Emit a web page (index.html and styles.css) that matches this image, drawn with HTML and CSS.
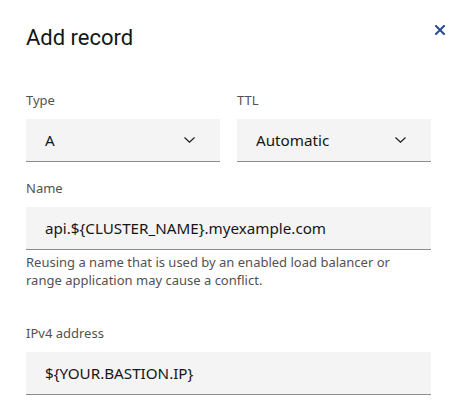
FILE: index.html
```html
<!DOCTYPE html>
<html lang="en">
<head>
<meta charset="utf-8">
<title>Add record</title>
<link rel="stylesheet" href="styles.css">
</head>
<body>
<div class="modal">
  <div class="header">
    <h1 class="title">Add record</h1>
    <button class="close" aria-label="Close">
      <svg width="10" height="10" viewBox="0 0 10 10"><path d="M1 1 L9 9 M9 1 L1 9" stroke="#2c4a93" stroke-width="2" fill="none" stroke-linecap="square"/></svg>
    </button>
  </div>
  <div class="row">
    <div class="field">
      <div class="label">Type</div>
      <div class="control select"><span>A</span>
        <svg class="chev" width="11" height="6" viewBox="0 0 11 6"><path d="M0.5 0.5 L5.5 5.2 L10.5 0.5" stroke="#161616" stroke-width="1.1" fill="none"/></svg>
      </div>
    </div>
    <div class="field">
      <div class="label">TTL</div>
      <div class="control select"><span>Automatic</span>
        <svg class="chev" width="11" height="6" viewBox="0 0 11 6"><path d="M0.5 0.5 L5.5 5.2 L10.5 0.5" stroke="#161616" stroke-width="1.1" fill="none"/></svg>
      </div>
    </div>
  </div>
  <div class="field name">
    <div class="label">Name</div>
    <div class="control">api.${CLUSTER_NAME}.myexample.com</div>
    <p class="helper">Reusing a name that is used by an enabled load balancer or range application may cause a conflict.</p>
  </div>
  <div class="field ipv4">
    <div class="label">IPv4 address</div>
    <div class="control">${YOUR.BASTION.IP}</div>
  </div>
</div>
</body>
</html>
```
FILE: styles.css
```css
html, body {
  margin: 0;
  padding: 0;
  background: #ffffff;
}
.modal {
  width: 405px;
  padding: 0 0 0 26px;
  font-family: "Noto Sans", "Open Sans", sans-serif;
  color: #161616;
}
.header {
  display: flex;
  justify-content: space-between;
  align-items: flex-start;
  padding-top: 24px;
  height: 70px;
  box-sizing: border-box;
}
.title {
  margin: 0;
  font-family: Roboto, "Noto Sans", sans-serif;
  font-weight: 400;
  font-size: 22px;
  line-height: 28px;
  color: #161616;
}
.close {
  border: 0;
  background: none;
  padding: 0;
  margin: 1px -14px 0 0;
  width: 10px;
  height: 10px;
  display: flex;
}
.row {
  display: grid;
  grid-template-columns: 194px 194px;
  column-gap: 17px;
  margin-top: 22px;
}
.label {
  font-size: 13px;
  line-height: 16px;
  color: #525252;
  margin-bottom: 11px;
}
.control {
  height: 43px;
  box-sizing: border-box;
  background: #f4f4f4;
  border-bottom: 1px solid #8d8d8d;
  padding: 0 19px;
  display: flex;
  align-items: center;
  font-size: 15.2px;
  color: #161616;
}
.select {
  justify-content: space-between;
  padding-right: 25px;
}
.chev {
  display: block;
}
.name {
  margin-top: 18px;
}
.helper {
  margin: 3px 0 0;
  font-size: 13px;
  line-height: 18px;
  color: #525252;
  width: 400px;
}
.ipv4 {
  margin-top: 36px;
}
```
